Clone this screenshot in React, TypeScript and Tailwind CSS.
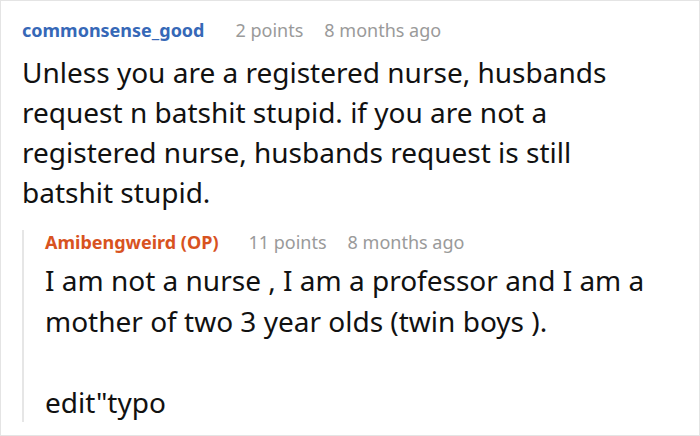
export default function App() {
  return (
    <div className="h-[436px] w-[700px] overflow-hidden border border-[#e4e4e4] bg-white font-['Noto_Sans',sans-serif] text-[#111]">
      {/* PARENT COMMENT */}
      <div className="pl-[21px] pr-[40px] pt-[17px]">
        <div className="flex items-baseline text-[18px] leading-[24px]">
          <span className="font-bold text-[#3668b7]">commonsense_good</span>
          <span className="ml-[31px] text-[#9a9a9a]">2 points</span>
          <span className="ml-[21px] text-[#9a9a9a]">8 months ago</span>
        </div>
        <p className="mt-[10px] text-[28px] leading-[40px]">
          Unless you are a registered nurse, husbands request n batshit stupid. if you are not a registered nurse, husbands request is still batshit stupid.
        </p>
      </div>

      {/* REPLY */}
      <div className="ml-[21px] mr-[40px] mt-[18px] border-l-2 border-[#e6e6e6] pl-[21px]">
        <div className="flex items-baseline text-[18px] leading-[24px]">
          <span className="font-bold text-[#d8531f]">Amibengweird (OP)</span>
          <span className="ml-[30px] text-[#9a9a9a]">11 points</span>
          <span className="ml-[21px] text-[#9a9a9a]">8 months ago</span>
        </div>
        <div className="mt-[6px] text-[28px] leading-[40.5px]">
          <p>I am not a nurse , I am a professor and I am a mother of two 3 year olds (twin boys ).</p>
          <p>&nbsp;</p>
          <p>edit"typo</p>
        </div>
      </div>
    </div>
  );
}
